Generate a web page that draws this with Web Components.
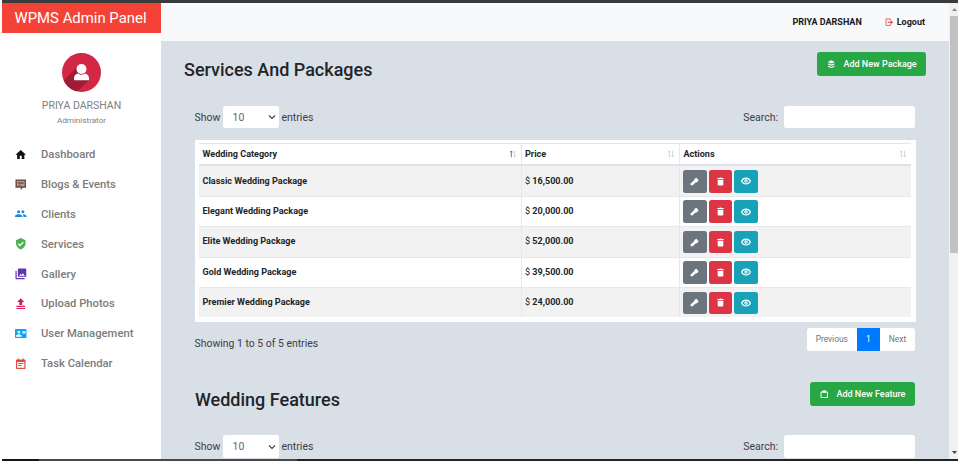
<!DOCTYPE html>
<html lang="en">
<head>
<meta charset="utf-8">
<title>WPMS Admin Panel</title>
<style>
html,body{margin:0;height:461px;overflow:hidden;background:#fff;font-family:Roboto,"Liberation Sans",sans-serif}
</style>
</head>
<body>
<admin-app></admin-app>
<script>
const define = (name, render) => customElements.define(name, class extends HTMLElement {
  connectedCallback() {
    if (this.shadowRoot) return;
    this.attachShadow({ mode: 'open' }).innerHTML = render(this);
  }
});
const at = (el, n, d = '') => el.getAttribute(n) ?? d;

const ICONS = {
  home: '<path d="M10 21v-7h4v7h5.500v-9H23L12 2 1 12h3.500v9z"/>',
  blog: '<path fill="#6d4c41" d="M1 1h22v17h-7l-4 5.500V18H1z"/><path fill="#b5a29b" d="M4 4h16v11H4z"/><path fill="#6d4c41" d="M6 6h12v1.600H6zM6 9h12v1.600H6zM6 12h7v1.600H6z"/>',
  group: '<path d="M16.500 11a3.200 3.200 0 1 0 0-6.400 3.200 3.200 0 0 0 0 6.400zM7.500 11a3.200 3.200 0 1 0 0-6.400 3.200 3.200 0 0 0 0 6.400zM7.500 13C5 13 0 14.200 0 16.500V19h15v-2.500C15 14.200 10 13 7.500 13zM16.500 13l-1 .1c1.200.8 2 1.900 2 3.400V19H24v-2.500c0-2.300-5-3.500-7.500-3.500z"/>',
  shield: '<path d="M12 0 2 4.500v6.700C2 17 6.300 22.500 12 24c5.700-1.500 10-7 10-12.800V4.500z"/><path fill="none" stroke="#fff" stroke-width="2.600" d="m6.800 12 3.700 3.700 7-7.200"/>',
  gallery: '<path d="M23.500 16.500V3c0-1.100-.9-2-2-2H8C6.900 1 6 1.900 6 3v13.500c0 1.100.9 2 2 2h13.500c1.100 0 2-.9 2-2zM11.500 12l2 2.700 3-3.700 4 5h-12zM1 5.500V21.500c0 1.100.9 2 2 2H20v-2.500H3.500V5.500z"/>',
  upload: '<path d="M9 14.500h6V8.500h4.500L12 .5 4.500 8.500H9zM3 16.200h18v2.500H3zM3 20.700h18v2.500H3z"/>',
  card: '<path d="M2 2h20a2 2 0 0 1 2 2v15a2 2 0 0 1-2 2H2a2 2 0 0 1-2-2V4c0-1.100.9-2 2-2z"/><path fill="#fff" d="M8 5.500a3 3 0 1 1 0 6 3 3 0 0 1 0-6zM2 18v-1c0-2.500 4-3.700 6-3.700s6 1.200 6 3.700v1zM15.500 6H22v5.500h-6.500z"/><path fill="none" stroke="#03a9f4" stroke-width="1.200" d="m15.500 7 3.200 2.300L22 7"/>',
  calendar: '<path d="M20 3h-1.500V1H16v2H8V1H5.500v2H4a2 2 0 0 0-2 2v16c0 1.100.9 2 2 2h16a2 2 0 0 0 2-2V5a2 2 0 0 0-2-2zm-.5 17.500h-15V8.500h15zM6.500 10.500h11v2h-11zM6.500 14.500h7.500v2H6.500z"/>',
  logout: '<path fill="none" stroke="currentColor" stroke-width="2.200" d="M15 7V2.500H3v19h12V17"/><path d="M8 10.700h8V6.500l7 5.500-7 5.500v-4.200H8z"/>',
  layers: '<path d="M12 1 2 5.500 12 10l10-4.500zM3 9v3.500l9 4 9-4V9l-9 4zM3 15.500v3.300l9 4.200 9-4.200v-3.300l-9 4z"/>',
  clipboard: '<path fill="none" stroke="currentColor" stroke-width="2.800" d="M3 5.500h18v16H3z"/><path d="M7 5c0-2.500 1.500-4 3-4h4c1.500 0 3 1.500 3 4v2.500H7z"/>',
  tool: '<path d="m1.500 17 9-7.500C11.500 5 14.500 2.500 18.500 2l.5 3.500 3.500 2C23 11 20 14.500 15 14.500L7 22c-3.500 1.500-7-2-5.500-5z"/>',
  trash: '<path d="M4.500 7h15v13c0 1.500-1 2.500-2.500 2.500H7c-1.500 0-2.500-1-2.500-2.500zM3.500 2.800H9l1-1.300h4l1 1.300h5.500V5.500h-17z"/>',
  eye: '<path fill="none" stroke="currentColor" stroke-width="2.600" d="M1.500 12C3.500 7.500 7.400 5 12 5s8.500 2.500 10.500 7c-2 4.500-5.900 7-10.500 7S3.500 16.500 1.500 12z"/><circle cx="12" cy="12" r="4.200"/><circle cx="12" cy="12" r="1.500" fill="#17a2b8"/>',
  sort: '<path fill="none" stroke="currentColor" stroke-width="2.400" d="M7 22V3M3.500 7 7 3l3.500 4"/><path fill="none" stroke="var(--down,currentColor)" stroke-width="2.400" d="M17 2v19M13.500 17l3.500 4 3.500-4"/>'
};

define('ui-icon', el => `<style>:host{display:block;flex:none;width:${at(el,'size','11')}px;height:${at(el,'size','11')}px}svg{display:block;width:100%;height:100%;fill:currentColor}</style><svg viewBox="0 0 24 24">${ICONS[at(el,'name')]}</svg>`);

define('nav-item', el => `<style>:host{display:flex;align-items:center;height:29.900px;padding-left:13px;gap:14.500px;font-size:11.250px;font-weight:500;color:#7c7c7c;white-space:nowrap}ui-icon{color:${at(el,'tint')}}</style><ui-icon name="${at(el,'icon')}" size="11.500"></ui-icon><span><slot></slot></span>`);

define('user-card', () => `<style>:host{display:flex;flex-direction:column;align-items:center;height:106.500px;padding-top:20px;box-sizing:border-box;color:#808080}
svg{display:block;width:39px;height:39px}.n{font-size:10.500px;line-height:14px;margin-top:7px}.r{font-size:8.100px;line-height:14px}</style>
<svg viewBox="0 0 39 39"><defs><clipPath id="c"><circle cx="19.500" cy="19.500" r="19.500"/></clipPath></defs><g clip-path="url(#c)"><path fill="#d32746" d="M0 0h39v39H0z"/><path fill="#9f1b38" d="m15 14-15 15v10h14l13.500-12-8-6z"/></g><circle cx="19.500" cy="16" r="5" fill="#fff"/><path fill="#fff" d="M12 27.300v-2c0-2.600 1.800-4.300 4.200-4.800 2 1.600 4.600 1.600 6.600 0 2.400.5 4.200 2.200 4.200 4.800v2z"/></svg>
<div class="n">PRIYA DARSHAN</div><div class="r">Administrator</div>`);

define('side-bar', () => `<style>:host{display:block;width:159px;background:#fff}.b{height:30px;background:#f44336;color:#fff;font-size:14.900px;line-height:31px;padding-left:12.500px;white-space:nowrap}</style>
<div class="b">WPMS Admin Panel</div><user-card></user-card>
<nav>
<nav-item icon="home" tint="#111">Dashboard</nav-item><nav-item icon="blog" tint="#6d4c41">Blogs &amp; Events</nav-item>
<nav-item icon="group" tint="#1e88e5">Clients</nav-item><nav-item icon="shield" tint="#4caf50">Services</nav-item>
<nav-item icon="gallery" tint="#5e35b1">Gallery</nav-item><nav-item icon="upload" tint="#d81b60">Upload Photos</nav-item>
<nav-item icon="card" tint="#03a9f4">User Management</nav-item><nav-item icon="calendar" tint="#e5483f">Task Calendar</nav-item>
</nav>`);

define('top-bar', () => `<style>:host{display:flex;height:38px;align-items:center;justify-content:flex-end;background:#f8f9fb;padding-right:24px;gap:23.500px;font-size:9px;font-weight:700;color:#16181b;white-space:nowrap}.l{display:flex;align-items:center;gap:3px}ui-icon{color:#e0403c}</style>
<span>PRIYA DARSHAN</span><span class="l"><ui-icon name="logout" size="8.500"></ui-icon><span>Logout</span></span>`);

define('section-head', el => `<style>:host{display:flex;justify-content:space-between;height:24px;color:#212529}h3{margin:0;font-size:18px;font-weight:500;line-height:36px;white-space:nowrap}
.b{display:flex;align-items:center;box-sizing:border-box;width:${at(el,'bw')}px;height:24px;border-radius:3px;background:#28a745;color:#fff;padding-left:10px;gap:8.500px;font-size:9px;font-weight:500;white-space:nowrap}</style>
<h3><slot></slot></h3><div class="b"><ui-icon name="${at(el,'icon')}" size="8.500"></ui-icon><span>${at(el,'action')}</span></div>`);

define('table-tools', () => `<style>:host{display:flex;justify-content:space-between;height:22.500px;font-size:10.500px;color:#3c4046;line-height:23.500px;white-space:nowrap}div{display:flex}
.s{box-sizing:border-box;width:55.500px;height:22.500px;background:#fff;border-radius:2.500px;margin:0 3px;padding:1px 3px 0 9.500px;display:flex;align-items:center;justify-content:space-between;color:#5f666d}
.s svg{width:8px;height:8px}.i{width:131px;background:#fff;border-radius:2.500px;margin-left:6px}.show{width:25.500px}</style>
<div><span class="show">Show</span><div class="s"><span>10</span><svg viewBox="0 0 8 8"><path d="m1 2.500 3 3 3-3" fill="none" stroke="#444" stroke-width="1.200"/></svg></div><span>entries</span></div><div><span>Search:</span><div class="i"></div></div>`);

define('action-button', el => `<style>:host{display:flex;align-items:center;justify-content:center;width:23.500px;height:22.500px;border-radius:2.500px;color:#fff;background:${at(el,'color')}}</style><ui-icon name="${at(el,'icon')}" size="${at(el,'size','10')}"></ui-icon>`);

const ROWS = [['Classic','16,500.00'],['Elegant','20,000.00'],['Elite','52,000.00'],['Gold','39,500.00'],['Premier','24,000.00']];
define('package-table', () => `<style>:host{display:block;box-sizing:border-box;height:182px;background:#fff;padding:3px 4.500px;font-size:9.050px;color:#212529}
.g{display:grid;box-sizing:border-box;grid-template-columns:322.500px 158.500px 1fr}.g>*{box-sizing:border-box;border-right:1px solid #e6e8ea;white-space:nowrap}.g>:last-child{border-right:0}
.h{height:22.500px;border-top:1px solid #e4e7ea;border-bottom:2px solid #dee2e6;font-weight:700}.h>*{display:flex;align-items:center;justify-content:space-between;padding:0 4px 0 3.500px}
.h ui-icon{color:#c5c8cb}.h .on{color:#555;--down:#c5c8cb}
.r{height:30.400px;line-height:28.600px;font-weight:700}.r>*{border-top:1px solid #e6e8ea;padding-left:3.500px}.r:nth-child(odd){background:#f2f2f2}.g.r:first-of-type>*{border-top-color:transparent}.r i{font-style:normal;font-weight:400}
.r .a{display:flex;gap:2.200px;padding:3.500px 0 0 3px}</style>
<div class="g h"><div>Wedding Category<ui-icon class="on" name="sort" size="8"></ui-icon></div><div>Price<ui-icon name="sort" size="8"></ui-icon></div><div>Actions<ui-icon name="sort" size="8"></ui-icon></div></div>
<section>${ROWS.map(([n,p])=>`<div class="g r"><div>${n} Wedding Package</div><div><i>$</i> ${p}</div><div class="a"><action-button icon="tool" color="#6c757d" size="9"></action-button><action-button icon="trash" color="#dc3545" size="9"></action-button><action-button icon="eye" color="#17a2b8"></action-button></div></div>`).join('')}</section>`);

define('table-foot', () => `<style>:host{display:flex;justify-content:space-between;height:23px;font-size:10.450px;color:#3c4046;white-space:nowrap}.t{line-height:31px}
.p{display:flex;font-size:8.400px;line-height:23px;text-align:center;color:#6c757d}.p>*{background:#fff}.v{width:49.500px;border-radius:2.500px 0 0 2.500px}.p .o{width:23.500px;background:#007bff;color:#fff}.x{width:35px;border-radius:0 2.500px 2.500px 0}</style>
<span class="t">Showing 1 to 5 of 5 entries</span><div class="p"><span class="v">Previous</span><span class="o">1</span><span class="x">Next</span></div>`);

define('scroll-rail', () => `<style>:host{display:flex;flex-direction:column;width:9px;box-sizing:border-box;background:#f1f1f1;align-items:center;justify-content:space-between;padding-left:1px}.u{height:13px;width:100%;display:grid;place-items:center}.t{width:100%;height:237px;background:#c1c1c1}.d{margin-top:auto;height:13px;width:100%;display:grid;place-items:center}svg{width:5px;height:3px}</style>
<div class="u"><svg viewBox="0 0 5 3"><path fill="#8a8a8a" d="M0 3 2.500 0 5 3z"/></svg></div><div class="t"></div><div class="d"><svg viewBox="0 0 5 3"><path fill="#444" d="M0 0h5L2.500 3z"/></svg></div>`);

define('admin-app', () => `<style>:host{display:flex;flex-direction:column;height:461px;margin-left:2px;overflow:hidden}
.top{height:3px;flex:none;background:#3a3b3d}.m{display:flex;height:456px;flex:none}.bot{height:2px;flex:none;background:linear-gradient(90deg,#161616 37px,#48484a 37px,#48484a 295px,#222 295px)}
.c{flex:1;min-width:0;display:flex;flex-direction:column;background:#d9dfe7}.c>*{flex:none}
.h1{margin:11px 23px 0}.t1{margin:29.500px 34px 0 33.500px}package-table{margin:12px 33.500px 0}table-foot{margin:6px 34px 0 33.500px}.h2{margin:31px 34.500px 0 34px}.t2{margin:29px 34px 0 33.500px}</style>
<div class="top"></div><div class="m"><side-bar></side-bar><div class="c"><top-bar></top-bar>
<section-head class="h1" icon="layers" action="Add New Package" bw="109.500">Services And Packages</section-head>
<table-tools class="t1"></table-tools><package-table></package-table><table-foot></table-foot>
<section-head class="h2" icon="clipboard" action="Add New Feature" bw="105">Wedding Features</section-head>
<table-tools class="t2"></table-tools></div><scroll-rail></scroll-rail></div><div class="bot"></div>`);
</script>
</body>
</html>
